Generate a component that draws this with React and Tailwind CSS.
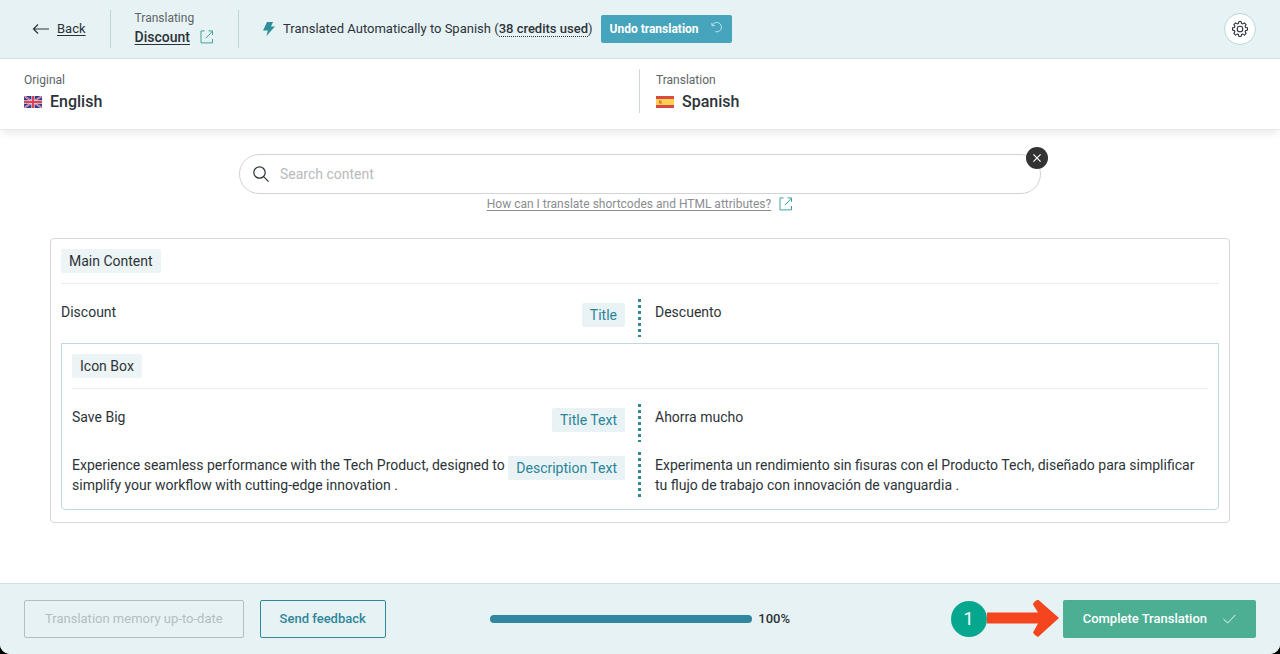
import { useState } from "react";

const sections = {
  title: "Main Content",
  rows: [{ id: "title", original: "Discount", label: "Title", translation: "Descuento" }],
  box: {
    title: "Icon Box",
    rows: [
      { id: "box-title", original: "Save Big", label: "Title Text", translation: "Ahorra mucho" },
      {
        id: "box-description",
        original:
          "Experience seamless performance with the Tech Product, designed to simplify your workflow with cutting-edge innovation .",
        label: "Description Text",
        translation:
          "Experimenta un rendimiento sin fisuras con el Producto Tech, diseñado para simplificar tu flujo de trabajo con innovación de vanguardia .",
      },
    ],
  },
};

function ExternalIcon() {
  return (
    <svg width="14" height="14" viewBox="0 0 14 14" fill="none" stroke="#3fa39c" className="shrink-0">
      <path d="M4.500.9H1v12h11.500V9M6 8l6.500-6.800M8.500.9h4v4" />
    </svg>
  );
}

function UkFlag() {
  return (
    <svg width="18" height="12" viewBox="0 0 18 12">
      <path fill="#2f3f8f" d="M0 0h18v12H0z" />
      <path stroke="#e8c9dc" strokeWidth="1.8" d="M0 0l18 12M18 0L0 12" />
      <path stroke="#d8485a" strokeWidth="0.8" d="M0 0l18 12M18 0L0 12" />
      <path stroke="#f3d3dc" strokeWidth="3.4" d="M9 0v12M0 6h18" />
      <path stroke="#dc4256" strokeWidth="2" d="M9 0v12M0 6h18" />
    </svg>
  );
}

function SpainFlag() {
  return (
    <svg width="18" height="12" viewBox="0 0 18 12">
      <path fill="#d94a45" d="M0 0h18v12H0z" />
      <path fill="#fbd34f" d="M0 3h18v6H0z" />
      <path fill="#d9663f" d="M3 4.500h2.600v1H4.400v.8h1.200v1.500H4.200L3 6.800z" />
    </svg>
  );
}

function Chip({ children }) {
  return (
    <h2 className="inline-block rounded-xs bg-[#edf4f5] px-2 text-sm leading-6 text-[#2c3338]">{children}</h2>
  );
}

function Row({ row }) {
  return (
    <div className="grid grid-cols-[minmax(0,1fr)_30px_minmax(0,1fr)] min-h-[38px]">
      <div className="flex items-start justify-between">
        <p className="pt-[3px] pb-1">{row.original}</p>
        <span className="mt-1 shrink-0 rounded-xs bg-[#e9f3f5] px-2 leading-6 text-[#2b8597]">{row.label}</span>
      </div>
      <div className="ml-[13px] w-[3px] bg-[repeating-linear-gradient(to_bottom,#32898f_0_3px,transparent_3px_6px)]" />
      <p className="pt-[3px] pb-1">{row.translation}</p>
    </div>
  );
}

function Language({ label, name, flag }) {
  return (
    <div>
      <p className="text-xs leading-[22px] text-[#5d6466]">{label}</p>
      <div className="flex items-center gap-2">
        {flag}
        <span className="text-base font-medium leading-[22px] text-[#2c3338]">{name}</span>
      </div>
    </div>
  );
}

export default function App() {
  const [query, setQuery] = useState("");
  const progress = 100;

  return (
    <div className="min-h-screen bg-black font-[Roboto,sans-serif] text-sm leading-5 text-[#2c3338]">
      <div className="flex min-h-screen flex-col overflow-hidden rounded-b-[10px] bg-white">
        <header className="flex items-center border-b border-[#cfe0e0] bg-[#e7f2f5] py-2.5 pr-6 pl-8 text-[13px]">
          <a href="#back" className="flex items-center gap-2 pr-6">
            <svg width="17" height="12" viewBox="0 0 17 12" fill="none" stroke="#2c3338" strokeWidth="1.2">
              <path d="M17 6H1.500M6 1.500L1.500 6 6 10.500" />
            </svg>
            <span className="underline underline-offset-2">Back</span>
          </a>
          <div className="border-x border-[#b9d8da] px-6">
            <p className="text-xs leading-4 text-[#5d6466]">Translating</p>
            <a href="#discount" className="flex items-center gap-2.5 text-sm leading-[22px]">
              <span className="font-medium underline underline-offset-2">Discount</span>
              <ExternalIcon />
            </a>
          </div>
          <div className="flex items-center pl-6">
            <svg width="12" height="14" viewBox="0 0 12 14" fill="#2f8f98" className="mr-2">
              <path d="M4 0h6L8 4.500h4L3.400 14l1.400-5.500H0z" />
            </svg>
            <p>
              Translated Automatically to Spanish (
              <span className="border-b border-dotted border-[#2c3338] font-medium">38 credits used</span>)
            </p>
            <button className="ml-2 flex h-7 items-center gap-3 rounded-xs bg-[#46a4bc] px-[9px] text-xs font-bold text-white">
              Undo translation
              <svg width="12" height="12" viewBox="0 0 12 12" fill="none" stroke="#c9e8ef" strokeWidth="0.9" className="mb-1">
                <path d="M1.300 4.600A4.700 4.700 0 1 1 4.300 10.600M.8 4.800L4 4.600M.9 4.800V1.800" />
              </svg>
            </button>
          </div>
          <button
            aria-label="Settings"
            className="ml-auto flex size-8 items-center justify-center rounded-full border border-[#b9d8da] bg-white"
          >
            <svg width="18" height="18" viewBox="0 0 18 18" fill="none" stroke="#2c3338" strokeWidth="1.1" strokeLinejoin="round">
              <circle cx="9" cy="9" r="2.8" />
              <path d="M7.9 1.5h2.2l.4 1.9 1.3.5 1.6-1 1.7 1.7-1 1.6.5 1.3 1.9.4v2.2l-1.9.4-.5 1.3 1 1.6-1.7 1.7-1.6-1-1.3.5-.4 1.9H7.9l-.4-1.9-1.3-.5-1.6 1-1.700-1.700 1-1.600-.5-1.300-1.900-.4V7.900l1.900-.4.5-1.300-1-1.600 1.700-1.700 1.600 1 1.300-.5z" />
            </svg>
          </button>
        </header>

        <section className="grid grid-cols-2 border-b border-[#e6e8e9] pt-2.5 pb-4 shadow-[0_5px_8px_-2px_rgba(0,0,0,0.09)]">
          <div className="border-r border-[#cdd6d8] pl-6">
            <Language label="Original" name="English" flag={<UkFlag />} />
          </div>
          <div className="pl-4">
            <Language label="Translation" name="Spanish" flag={<SpainFlag />} />
          </div>
        </section>

        <main className="flex-1 px-[50px] pt-6 pb-[60px]">
          <div className="relative mx-auto max-w-[802px]">
            <label className="flex h-10 items-center gap-[11px] rounded-full border border-[#d0d4d6] pl-[13px]">
              <svg width="16" height="16" viewBox="0 0 16 16" fill="none" stroke="#2c3338" strokeWidth="1.2">
                <circle cx="6.5" cy="6.5" r="5.7" />
                <path d="M10.6 10.6l5 5" />
              </svg>
              <input
                type="text"
                aria-label="Search content"
                placeholder="Search content"
                value={query}
                onChange={(e) => setQuery(e.target.value)}
                className="mr-8 flex-1 outline-none placeholder:text-[#b8bbbd]"
              />
            </label>
            <button
              aria-label="Clear search"
              onClick={() => setQuery("")}
              className="absolute -top-[7px] -right-[7px] flex size-[22px] items-center justify-center rounded-full bg-[#333]"
            >
              <svg width="8" height="8" viewBox="0 0 8 8" stroke="#fff" strokeWidth="1.2">
                <path d="M.4.4l7.2 7.2M7.6.4L.4 7.6" />
              </svg>
            </button>
          </div>
          <a href="#help" className="flex items-center justify-center gap-2 text-xs leading-5 text-[#8a8d8f]">
            <span className="underline underline-offset-2">How can I translate shortcodes and HTML attributes?</span>
            <ExternalIcon />
          </a>

          <div className="mt-6 rounded border border-[#d3d9dc] px-2.5 pt-2.5 pb-3">
            <div className="flex border-b border-[#eaedee] pb-2.5">
              <Chip>{sections.title}</Chip>
            </div>
            <div className="pt-[15px] pb-1.5">
              {sections.rows.map((row) => (
                <Row key={row.id} row={row} />
              ))}
            </div>
            <div className="rounded-b border border-[#bfdadc] p-2.5">
              <div className="flex border-b border-[#eaedee] pb-2.5">
                <Chip>{sections.box.title}</Chip>
              </div>
              <div className="flex flex-col gap-2.5 pt-[15px]">
                {sections.box.rows.map((row) => (
                  <Row key={row.id} row={row} />
                ))}
              </div>
            </div>
          </div>
        </main>

        <footer className="grid grid-cols-[1fr_300px_1fr] items-center border-t border-[#cfe0e0] bg-[#e7f2f5] px-6 py-4 text-[13px]">
          <div className="flex gap-4">
            <button disabled className="h-[38px] rounded-xs border border-[#b2bfc1] px-5 text-[#b2bfc1]">
              Translation memory up-to-date
            </button>
            <button className="h-[38px] rounded-xs border border-[#2f8799] px-[19px] font-medium text-[#2f8799]">
              Send feedback
            </button>
          </div>
          <div className="flex items-center gap-1.5">
            <div className="h-2 flex-1 rounded-full bg-[#cfe0e0]">
              <div className="h-2 rounded-full bg-[#3187a0]" style={{ width: `${progress}%` }} />
            </div>
            <span className="font-medium">{progress}%</span>
          </div>
          <div className="relative justify-self-end">
            {/* step marker pointing at the button */}
            <div className="absolute top-0 right-full mr-1 flex h-[38px] items-center">
              <span className="flex size-9 items-center justify-center rounded-full bg-[#05a88f] text-lg text-white">
                1
              </span>
              <svg width="72" height="38" viewBox="0 0 72 38" fill="#f5451f">
                <path d="M0 12.500H51L46 4.500Q46 2 51-.5L72 18 51 37Q47 35 46 32.500L51 23.500H0z" />
              </svg>
            </div>
            <button className="flex h-[38px] items-center gap-4 rounded-xs bg-[#4cae93] px-5 font-medium text-white">
              Complete Translation
              <svg width="13" height="10" viewBox="0 0 13 10" fill="none" stroke="#fff" strokeWidth="0.9">
                <path d="M.5 5l4.200 4L12.500.8" />
              </svg>
            </button>
          </div>
        </footer>
      </div>
    </div>
  );
}
